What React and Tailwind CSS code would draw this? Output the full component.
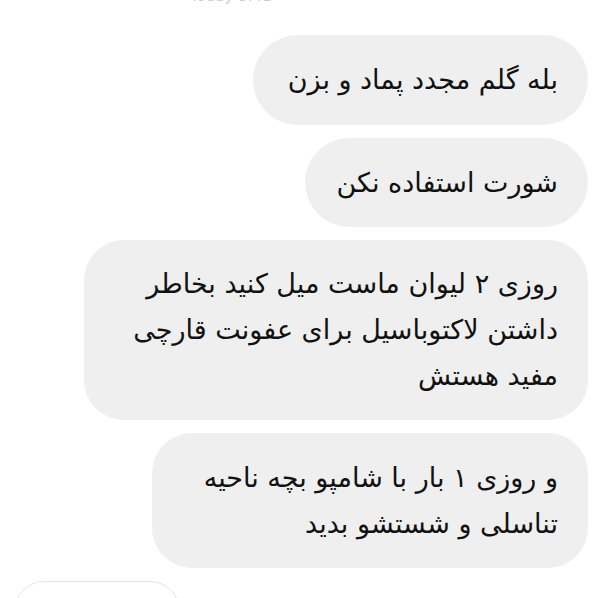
export default function App() {
  const bubbles = [
    { lines: ["بله گلم مجدد پماد و بزن"], cls: "w-[335px] h-[90px] rounded-full" },
    { lines: ["شورت استفاده نکن"], cls: "w-[283px] h-[89px] rounded-full" },
    {
      lines: ["روزی ۲ لیوان ماست میل کنید بخاطر", "داشتن لاکتوباسیل برای عفونت قارچی", "مفید هستش"],
      cls: "w-[504px] h-[180px] rounded-[40px]",
    },
    {
      lines: ["و روزی ۱ بار با شامپو بچه ناحیه", "تناسلی و شستشو بدید"],
      cls: "w-[436px] h-[135px] rounded-[40px]",
    },
  ];

  return (
    <div
      dir="rtl"
      className="w-[598px] h-[598px] overflow-hidden bg-white flex flex-col items-start pr-[10px]"
      style={{ fontFamily: '"DejaVu Sans", "Noto Sans", sans-serif' }}
    >
      {/* cut-off label above the first message */}
      <div className="h-[35px] w-full overflow-hidden shrink-0">
        <p dir="ltr" className="-mt-[15px] ml-[190px] text-[15px] text-[#cccccc] text-left">Today 9:41</p>
      </div>

      <div className="flex flex-col items-start gap-[13px] w-full shrink-0">
        {bubbles.map((b, i) => (
          <div
            key={i}
            className={`${b.cls} shrink-0 bg-[#efefef] text-[#111] flex flex-col justify-center pr-[30px] text-[27px] leading-[46px]`}
          >
            {b.lines.map((l, j) => (
              <p key={j} className="whitespace-nowrap">{l}</p>
            ))}
          </div>
        ))}

        <div className="self-end ml-[14px] w-[166px] h-[60px] rounded-full border border-[#e3e3e3] bg-white shrink-0" />
      </div>
    </div>
  );
}
